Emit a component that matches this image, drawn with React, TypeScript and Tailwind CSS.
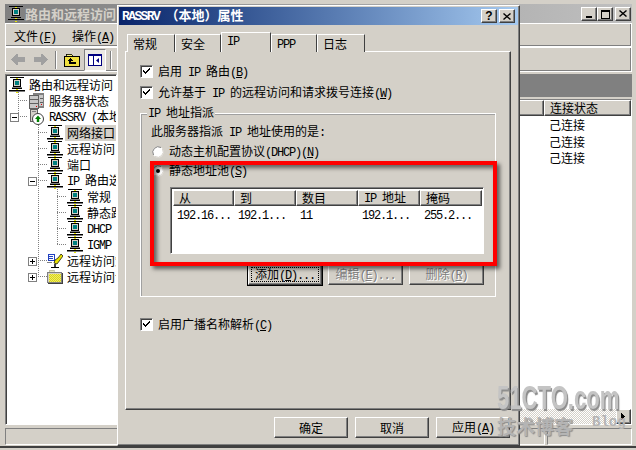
import React from "react";

const face = "bg-[#d4d0c8]";
const raised = "border border-t-white border-l-white border-r-[#404040] border-b-[#404040] shadow-[inset_-1px_-1px_0_#808080]";
const sunken = "border border-t-[#808080] border-l-[#808080] border-r-white border-b-white shadow-[inset_1px_1px_0_#404040]";
const cjk = "font-['Noto_Sans_CJK_SC','Noto_Sans',sans-serif]";
const ascii = "font-['Liberation_Mono',monospace] tracking-[-1.2px]";

function T({ s, className = "" }: { s: string; className?: string }) {
  const parts = s.split(/([\x00-\x7f]+)/).filter(Boolean);
  return (
    <span className={`whitespace-pre text-[12px] leading-[14px] text-black ${cjk} ${className}`}>
      {parts.map((p, i) =>
        /^[\x00-\x7f]/.test(p) ? (
          <span key={i} className={ascii}>
            {p.split(/(&.)/).map((q, j) =>
              q.startsWith("&") ? <u key={j}>{q.slice(1)}</u> : <span key={j}>{q}</span>
            )}
          </span>
        ) : (
          <span key={i}>{p}</span>
        )
      )}
    </span>
  );
}

function Computer() {
  return (
    <svg width="16" height="16" viewBox="0 0 16 16" shapeRendering="crispEdges" className="shrink-0">
      <rect x="7" y="0" width="2" height="2" fill="#e8e800" />
      <rect x="1" y="0" width="14" height="1" fill="#000" />
      <rect x="4" y="2" width="8" height="8" fill="#000" />
      <rect x="5" y="3" width="6" height="6" fill="#d4d0c8" />
      <rect x="6" y="4" width="4" height="4" fill="#008080" />
      <rect x="3" y="10" width="10" height="2" fill="#808080" />
      <rect x="3" y="11" width="10" height="1" fill="#000" />
      <rect x="7" y="12" width="2" height="2" fill="#e8e800" />
      <rect x="0" y="13" width="16" height="1" fill="#000" />
      <rect x="0" y="14" width="16" height="1" fill="#808080" />
      <rect x="7" y="15" width="2" height="1" fill="#e8e800" />
    </svg>
  );
}

function Servers() {
  return (
    <svg width="16" height="16" viewBox="0 0 16 16" shapeRendering="crispEdges" className="shrink-0">
      <rect x="4" y="0" width="11" height="15" fill="#808080" />
      <rect x="0" y="2" width="10" height="14" fill="#606060" />
      <rect x="1" y="3" width="8" height="12" fill="#c8c8c8" />
      <rect x="1" y="6" width="8" height="1" fill="#606060" />
      <rect x="1" y="10" width="8" height="1" fill="#606060" />
      <rect x="10" y="2" width="4" height="11" fill="#c8c8c8" />
      <rect x="11" y="5" width="3" height="1" fill="#606060" />
      <rect x="11" y="9" width="3" height="1" fill="#606060" />
      <rect x="7" y="13" width="1" height="1" fill="#e00000" />
      <rect x="12" y="11" width="1" height="1" fill="#e00000" />
    </svg>
  );
}

function ServerUp() {
  return (
    <svg width="16" height="16" viewBox="0 0 16 16" className="shrink-0">
      <rect x="1.5" y="0.5" width="7" height="12" fill="#d4d0c8" stroke="#606060" />
      <rect x="3" y="2" width="4" height="1" fill="#808080" />
      <circle cx="9" cy="10" r="5.5" fill="#fff" stroke="#404040" />
      <path d="M9 6.5 L12 10 H10.2 V13 H7.8 V10 H6 Z" fill="#008000" />
    </svg>
  );
}

function KeyIcon() {
  return (
    <svg width="16" height="16" viewBox="0 0 16 16" shapeRendering="crispEdges" className="shrink-0">
      <rect x="1" y="1" width="6" height="6" fill="#fff" stroke="#2040c0" strokeWidth="1" />
      <rect x="2" y="3" width="4" height="1" fill="#2040c0" />
      <rect x="2" y="5" width="4" height="1" fill="#2040c0" />
      <path d="M14 1 L16 3 L13 7 L10 11 L7 10 L8 7 L11 5 Z" fill="#e8e000" stroke="#000" strokeWidth="0.7" shapeRendering="auto" />
      <rect x="7" y="11" width="2" height="3" fill="#404040" />
      <rect x="4" y="14" width="8" height="1" fill="#000" />
      <rect x="0" y="9" width="5" height="1" fill="#808080" />
    </svg>
  );
}

function Folder() {
  return (
    <svg width="16" height="16" viewBox="0 0 16 16" shapeRendering="crispEdges" className="shrink-0">
      <defs>
        <pattern id="chk" width="2" height="2" patternUnits="userSpaceOnUse">
          <rect width="2" height="2" fill="#f0f060" />
          <rect width="1" height="1" fill="#d8d020" />
          <rect x="1" y="1" width="1" height="1" fill="#d8d020" />
        </pattern>
      </defs>
      <rect x="2" y="1" width="5" height="2" fill="#e8e8c0" stroke="#a0a080" strokeWidth="0.5" />
      <rect x="0.5" y="3.5" width="14" height="10" fill="#d4d0c8" stroke="#808080" />
      <rect x="15" y="4" width="1" height="11" fill="#404040" />
      <rect x="1" y="14" width="15" height="1" fill="#404040" />
      <rect x="2" y="5" width="12" height="8" fill="url(#chk)" />
    </svg>
  );
}

function Row({ indent, icon, text, selected = false, box }: { indent: number; icon: React.ReactNode; text: string; selected?: boolean; box?: "+" | "-" }) {
  return (
    <div className="relative flex h-[16px] items-center whitespace-nowrap" style={{ paddingLeft: indent }}>
      {box && (
        <span className="absolute top-[4px] flex h-[9px] w-[9px] items-center justify-center border border-[#808080] bg-white" style={{ left: indent - 19 }}>
          <span className="absolute h-px w-[5px] bg-black" />
          {box === "+" && <span className="absolute h-[5px] w-px bg-black" />}
        </span>
      )}
      {icon}
      <span className={`ml-[2px] flex h-[16px] items-center px-[2px] ${selected ? "bg-[#d4d0c8]" : ""}`}>
        <T s={text} />
      </span>
    </div>
  );
}

function Tree() {
  return (
    <div className={`relative h-full w-[112px] overflow-hidden bg-white pt-[2px] ${sunken}`}>
      <svg className="absolute left-0 top-0" width="112" height="348" shapeRendering="crispEdges">
        <g stroke="#808080" strokeDasharray="1 1" fill="none">
          <path d="M12 9V40" />
          <path d="M12 25H22" />
          <path d="M12 41H22" />
          <path d="M32 48V105" />
          <path d="M32 57H42M32 73H42M32 89H42M32 105H42" />
          <path d="M32 105V201" />
          <path d="M32 185H42M32 201H42" />
          <path d="M51 112V169" />
          <path d="M51 121H61M51 137H61M51 153H61M51 169H61" />
        </g>
      </svg>
      <div className="relative">
        <Row indent={3} icon={<Computer />} text="路由和远程访问" />
        <Row indent={23} icon={<Servers />} text="服务器状态" />
        <Row indent={23} box="-" icon={<ServerUp />} text="RASSRV (本地)" />
        <Row indent={41} icon={<Computer />} text="网络接口" selected />
        <Row indent={41} icon={<Computer />} text="远程访问" />
        <Row indent={41} icon={<Computer />} text="端口" />
        <Row indent={41} box="-" icon={<Computer />} text="IP 路由选择" />
        <Row indent={61} icon={<Computer />} text="常规" />
        <Row indent={61} icon={<Computer />} text="静态路由" />
        <Row indent={61} icon={<Computer />} text="DHCP" />
        <Row indent={61} icon={<Computer />} text="IGMP" />
        <Row indent={41} box="+" icon={<KeyIcon />} text="远程访问策略" />
        <Row indent={41} box="+" icon={<Folder />} text="远程访问记录" />
      </div>
    </div>
  );
}

function Check({ label }: { label: string }) {
  return (
    <div className="flex h-[13px] items-center gap-[5px]">
      <span className={`flex h-[13px] w-[13px] items-center justify-center bg-white ${sunken}`}>
        <svg width="9" height="9" viewBox="0 0 9 9" shapeRendering="crispEdges">
          <path d="M1 3h1v1h1v1h1V4h1V3h1V2h1V1h1v2H7v1H6v1H5v1H4v1H3V6H2V5H1z" fill="#000" />
        </svg>
      </span>
      <T s={label} />
    </div>
  );
}

function Radio({ on, label }: { on?: boolean; label: string }) {
  return (
    <div className="flex h-[12px] items-center gap-[5px]">
      <svg width="12" height="12" viewBox="0 0 12 12" className="shrink-0">
        <circle cx="6" cy="6" r="5.5" fill="#fff" />
        <path d="M1.5 9 A5.5 5.5 0 0 1 9 1.5" fill="none" stroke="#808080" />
        <path d="M3 10.5 A5.5 5.5 0 0 0 10.5 3" fill="none" stroke="#d4d0c8" />
        {on && <circle cx="6" cy="6" r="2" fill="#000" />}
      </svg>
      <T s={label} />
    </div>
  );
}

function Btn({ label, w, disabled, focused }: { label: string; w: string; disabled?: boolean; focused?: boolean }) {
  return (
    <div
      className={`relative flex h-[21px] items-center justify-center ${face} ${w} ${raised} ${
        focused ? "outline outline-1 outline-black" : ""
      }`}
    >
      {focused && <span className="absolute inset-[2px] border border-dotted border-black" />}
      <T s={label} className={disabled ? "!text-[#808080] [text-shadow:1px_1px_0_#fff]" : ""} />
    </div>
  );
}

function HeaderCell({ s }: { s: string }) {
  return (
    <div className={`flex h-[16px] items-center pl-[5px] ${face} ${raised}`}>
      <T s={s} />
    </div>
  );
}

function Dialog() {
  const tabs = [
    { t: "常规", w: "w-[48px]" },
    { t: "安全", w: "w-[46px]" },
    { t: "IP", w: "w-[50px]", on: true },
    { t: "PPP", w: "w-[46px]" },
    { t: "日志", w: "w-[48px]" },
  ];
  return (
    <div className={`absolute left-[117px] top-[5px] flex h-[441px] w-[403px] flex-col p-[1px] ${face} ${raised}`}>
      <div className="flex h-[18px] items-center justify-between bg-gradient-to-r from-[#0a246a] to-[#a6caf0] pl-[3px] pr-[3px]">
        <span className={`whitespace-pre text-[13px] font-bold text-white ${cjk}`}>
          <span className="font-['Liberation_Mono',monospace] tracking-[-1.6px]">RASSRV </span>（本地）属性
        </span>
        <div className="flex gap-[2px]">
          <div className={`flex h-[14px] w-[16px] items-center justify-center text-[12px] font-bold text-black ${face} ${raised} font-['Liberation_Sans',sans-serif]`}>?</div>
          <div className={`flex h-[14px] w-[16px] items-center justify-center ${face} ${raised}`}>
            <svg width="8" height="7" viewBox="0 0 8 7"><path d="M0.5 0.5L7.5 6.5M7.5 0.5L0.5 6.5" stroke="#000" strokeWidth="1.4" /></svg>
          </div>
        </div>
      </div>

      <div className="ml-[6px] mt-[7px] flex flex-col">
        <div className="relative z-10 -mb-px flex items-end pl-[2px]">
          {tabs.map((t) => (
            <div
              key={t.t}
              className={`flex items-center justify-start border-t border-l border-r border-t-white border-l-white border-r-[#404040] pl-[5px] ${face} ${t.w} ${
                t.on ? "h-[20px] pb-[3px]" : "h-[18px]"
              }`}
            >
              <T s={t.t} />
            </div>
          ))}
        </div>
        <div className={`h-[359px] w-[386px] pl-[14px] pt-[13px] ${raised}`}>
          <div className="flex flex-col gap-[8px]">
            <Check label="启用 IP 路由(&B)" />
            <Check label="允许基于 IP 的远程访问和请求拨号连接(&W)" />
          </div>
          <div className="relative mt-[14px] flex h-[184px] w-[356px] flex-col border border-white pl-[10px] pt-[11px] shadow-[inset_1px_1px_0_#a0a0a0]">
            <div className={`absolute left-[6px] top-[-8px] flex h-[14px] items-center px-[1px] ${face}`}>
              <T s="IP 地址指派" />
            </div>
            <div className="flex h-[14px] items-center">
              <T s="此服务器指派 IP 地址使用的是:" />
            </div>
            <div className="ml-[1px] mt-[7px] flex flex-col gap-[7px]">
              <Radio label="动态主机配置协议(DHCP)(&N)" />
              <Radio on label="静态地址池(&S)" />
            </div>
            <div className={`ml-[19px] mt-[10px] h-[67px] w-[314px] shrink-0 bg-white pl-[2px] pt-[2px] ${sunken}`}>
              <div className="grid grid-cols-[61px_62px_62px_62px_62px]">
                <HeaderCell s="从" />
                <HeaderCell s="到" />
                <HeaderCell s="数目" />
                <HeaderCell s="IP 地址" />
                <HeaderCell s="掩码" />
              </div>
              <div className="mt-[1px] grid h-[16px] grid-cols-[61px_62px_62px_62px_62px] items-center pl-[4px]">
                <T s="192.16..." />
                <T s="192.1..." />
                <T s="11" />
                <T s="192.1..." />
                <T s="255.2..." />
              </div>
            </div>
            <div className="mr-[11px] mt-[10px] flex justify-end gap-[6px]">
              <Btn label="添加(&D)..." w="w-[74px]" focused />
              <Btn label="编辑(&E)..." w="w-[75px]" disabled />
              <Btn label="删除(&R)" w="w-[75px]" disabled />
            </div>
          </div>
          <div className="mt-[21px]">
            <Check label="启用广播名称解析(&C)" />
          </div>
        </div>
        <div className="mt-[7px] flex w-[385px] justify-end gap-[7px]">
          <Btn label="确定" w="w-[74px]" />
          <Btn label="取消" w="w-[74px]" />
          <Btn label="应用(&A)" w="w-[74px]" />
        </div>
      </div>

      <div className="pointer-events-none absolute left-[32px] top-[155px] h-[105px] w-[347px] border-[4px] border-[#ff0000] shadow-[3px_3px_4px_rgba(0,0,0,0.55),inset_3px_3px_4px_rgba(0,0,0,0.55)]" />
    </div>
  );
}

function Main() {
  return (
    <div className="flex h-[448px] flex-col border-b-2 border-[#404040] pl-[5px] pr-[4px] pt-[4px]">
      <div className="flex h-[19px] shrink-0 items-center justify-between bg-gradient-to-r from-[#808080] to-[#c0c0c0] pl-[3px] pr-[1px]">
        <div className="flex items-center gap-[1px]">
          <Computer />
          <span className={`text-[13px] font-bold text-[#d4d0c8] ${cjk}`}>路由和远程访问</span>
        </div>
        <div className="flex">
          <div className={`relative h-[14px] w-[16px] ${face} ${raised}`}>
            <span className="absolute bottom-[2px] left-[4px] h-[2px] w-[6px] bg-black" />
          </div>
          <div className={`relative h-[14px] w-[16px] ${face} ${raised}`}>
            <span className="absolute left-[3px] top-[2px] h-[9px] w-[9px] border border-t-2 border-black" />
          </div>
          <div className={`ml-[2px] flex h-[14px] w-[16px] items-center justify-center ${face} ${raised}`}>
            <svg width="8" height="7" viewBox="0 0 8 7"><path d="M0.5 0.5L7.5 6.5M7.5 0.5L0.5 6.5" stroke="#000" strokeWidth="1.4" /></svg>
          </div>
        </div>
      </div>
      <div className="flex h-[24px] shrink-0 items-center gap-[16px] border border-white pl-[8px] pt-[3px] shadow-[inset_-1px_-1px_0_#808080]">
        <T s="文件(&F)" />
        <T s="操作(&A)" />
      </div>
      <div className="flex h-[25px] shrink-0 items-center border border-white pl-[5px] shadow-[inset_-1px_-1px_0_#808080]">
        <svg width="14" height="11" viewBox="0 0 14 11" shapeRendering="crispEdges"><path d="M6 0h1v3h7v5H7v3H6L0 6V5z" fill="#a0a0a0" /></svg>
        <svg width="14" height="11" viewBox="0 0 14 11" shapeRendering="crispEdges" className="ml-[9px]"><path d="M8 0H7v3H0v5h7v3h1l6-5V5z" fill="#a0a0a0" /></svg>
        <span className="ml-[7px] h-[18px] w-[2px] border-l border-r border-l-[#808080] border-r-white" />
        <svg width="16" height="16" viewBox="0 0 16 16" shapeRendering="crispEdges" className="ml-[7px]">
          <path d="M2 2h5l2 2h-7z" fill="#f6f080" stroke="#000" strokeWidth="0.8" />
          <rect x="0.5" y="4.5" width="15" height="10" fill="#f0e040" stroke="#000" />
          <path d="M6 6L3 9h2v3h7v-2H7V9h2z" fill="#000" />
        </svg>
        <div className="ml-[4px] flex h-[22px] w-[22px] items-center justify-center border border-t-[#808080] border-l-[#808080] border-r-white border-b-white bg-[#ebe9e4]">
          <svg width="14" height="12" viewBox="0 0 14 12" shapeRendering="crispEdges">
            <rect x="0" y="0" width="14" height="12" fill="#000080" />
            <rect x="1" y="2" width="4" height="9" fill="#fff" />
            <rect x="6" y="2" width="7" height="9" fill="#fff" />
            <path d="M11 4v5L8 6.500z" fill="#000080" shapeRendering="auto" />
          </svg>
        </div>
        <span className="ml-[4px] h-[18px] w-[2px] border-l border-r border-l-[#808080] border-r-white" />
      </div>
      <div className="mt-[2px] flex min-h-0 flex-1 gap-[3px]">
        <Tree />
        <div className="flex min-w-0 flex-1 flex-col">
          <div className="h-[23px] shrink-0 bg-[#808080]" />
          <div className={`relative mt-[2px] flex flex-1 flex-col overflow-hidden bg-white ${sunken}`}>
            <div className="flex h-[16px] shrink-0">
              <div className={`flex-1 ${face} ${raised}`} />
              <div className={`flex h-[16px] w-[87px] items-center pl-[5px] ${face} ${raised}`}>
                <T s="连接状态" />
              </div>
            </div>
            <div className="flex flex-1 flex-col items-end">
              <div className="w-[87px] pl-[5px]">
                <div className="flex h-[17px] items-center"><T s="己连接" /></div>
                <div className="flex h-[17px] items-center"><T s="己连接" /></div>
                <div className="flex h-[16px] items-center"><T s="己连接" /></div>
              </div>
            </div>
            <div className="flex h-[15px] shrink-0 justify-end bg-[repeating-conic-gradient(#d4d0c8_0_25%,#ffffff_0_50%)] bg-[length:2px_2px]">
              <div className={`flex h-[15px] w-[15px] items-center justify-center ${face} ${raised}`}>
                <svg width="5" height="7" viewBox="0 0 5 7" shapeRendering="crispEdges"><path d="M0 0h1v1h1v1h1v1h1v1H3v1H2v1H1v1H0z" fill="#000" /></svg>
              </div>
            </div>
          </div>
        </div>
      </div>
      <div className="mt-[3px] flex h-[18px] shrink-0 gap-[2px] pb-[1px]">
        <div className="flex-1 border border-t-[#808080] border-l-[#808080] border-r-white border-b-white" />
        <div className="w-[85px] border border-t-[#808080] border-l-[#808080] border-r-white border-b-white" />
      </div>
    </div>
  );
}

export default function App() {
  return (
    <div className={`relative h-[450px] w-[636px] overflow-hidden leading-[14px] ${face}`}>
      <Main />
      <Dialog />
      <div className="pointer-events-none absolute left-[497px] top-[378px] origin-left scale-x-[0.65] whitespace-nowrap font-['Liberation_Sans',sans-serif] text-[34px] font-bold leading-[38px] text-[#c4c4c4] [text-shadow:2px_2px_1px_#8c8c8c]">
        51CTO.com
      </div>
      <div className={`pointer-events-none absolute left-[497px] top-[414px] whitespace-nowrap text-[19px] font-bold leading-[24px] text-[#b4b4b4] [text-shadow:1px_1px_1px_#8c8c8c] ${cjk}`}>
        技术博客
      </div>
      <div className="pointer-events-none absolute left-[592px] top-[414px] whitespace-nowrap font-['Liberation_Mono',monospace] text-[14px] font-bold leading-[16px] text-[#b4b4b4]">
        Blog
      </div>
    </div>
  );
}
